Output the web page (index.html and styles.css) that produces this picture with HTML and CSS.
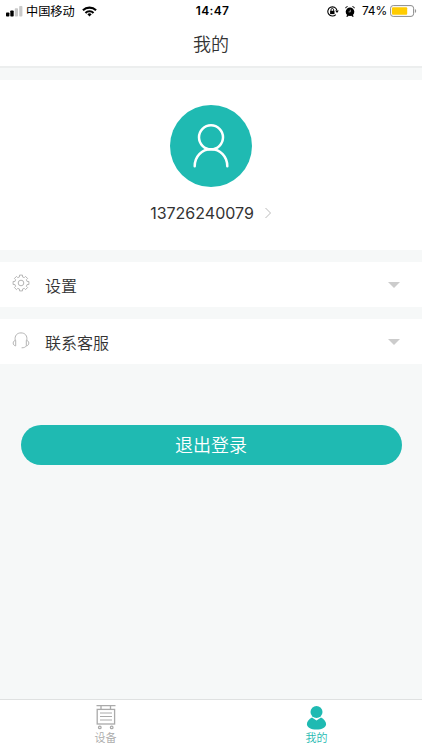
FILE: index.html
```
<!DOCTYPE html>
<html lang="zh-CN">
<head>
<meta charset="utf-8">
<meta name="viewport" content="width=device-width, initial-scale=1">
<title>我的</title>
<link rel="stylesheet" href="styles.css">
</head>
<body>
<div class="app">
  <header class="header">
    <div class="status">
      <div class="status-left">
        <svg class="signal" width="17" height="11" viewBox="0 0 17 11"><rect x="0" y="6.5" width="3.4" height="4" rx=".8"/><rect x="4.3" y="4.5" width="3.4" height="6" rx=".8"/><g fill="#c9c9c9"><rect x="8.8" y="2.3" width="3.2" height="8.2" rx=".8"/><rect x="13.2" y="0" width="3.2" height="10.5" rx=".8"/></g></svg>
        <span class="carrier">中国移动</span>
        <svg class="wifi" width="15" height="11" viewBox="0 0 16 11"><g fill="none" stroke="#000" stroke-width="2.2"><path d="M1 4.2a10 10 0 0 1 14 0"/><path d="M3.7 7a6.1 6.1 0 0 1 8.6 0"/></g><path d="M5.7 8.5a3.3 3.3 0 0 1 4.6 0L8 10.8Z"/></svg>
      </div>
      <time class="clock">14:47</time>
      <div class="status-right">
        <svg class="lock" width="12" height="11" viewBox="0 0 12 11"><path d="M8.8 8.6A4.6 4.6 0 1 1 9.9 4.4" fill="none" stroke="#000" stroke-width="1.1"/><path d="M8.1 4.6h3.7L10 7.1Z"/><rect x="3.1" y="4.8" width="4.4" height="3.3"/><path d="M4 5V3.8a1.3 1.3 0 0 1 2.6 0V5" fill="none" stroke="#000" stroke-width=".9"/></svg>
        <svg class="alarm" width="10" height="11" viewBox="0 0 10 11"><circle cx="5" cy="5.7" r="4.3"/><path d="M.2 2.6A2 2 0 0 1 3.1.5ZM9.8 2.6A2 2 0 0 0 6.9.5ZM1.1 10.5l1.5-2 1.2 1-1.1 1.2ZM8.9 10.5l-1.5-2-1.2 1 1.1 1.2Z"/><path d="M5.3 3.7v2.2H3.6" fill="none" stroke="#fff" stroke-width=".6"/></svg>
        <span class="percent">74%</span>
        <svg class="battery" width="27" height="12" viewBox="0 0 27 12"><rect x=".6" y=".6" width="23" height="10.8" rx="2.6" fill="#fff" stroke="#8b8b8b"/><rect x="2" y="2.2" width="15.2" height="7.6" rx="1" fill="#fc0"/><path d="M24.9 4v4a2.2 2.2 0 0 0 0-4" fill="#999"/></svg>
      </div>
    </div>
    <h1 class="title">我的</h1>
  </header>

  <main class="content">
    <section class="profile">
      <div class="avatar">
        <svg width="38" height="46" viewBox="0 0 38 46" fill="none" stroke="#fff" stroke-width="2.5" stroke-linecap="round"><circle cx="19" cy="14.3" r="12"/><path d="M2.7 43.3c0-10 7-17 16.3-17s16.3 7 16.3 17"/></svg>
      </div>
      <a class="phone"><span>13726240079</span>
        <svg width="8" height="12" viewBox="0 0 8 12" fill="none" stroke="#bbb"><path d="M1.5 1 6.5 6l-5 5"/></svg>
      </a>
    </section>

    <section class="row">
      <svg class="row-icon" width="18" height="18" viewBox="-9 -9 18 18" fill="none" stroke="#b5b5b5" stroke-linejoin="round"><path d="M-1.5-6.1V-7.9H1.5V-6.1L3.3-5.4 4.5-6.6 6.6-4.5 5.4-3.3 6.1-1.5H7.9V1.5H6.1L5.4 3.3 6.6 4.5 4.5 6.6 3.3 5.4 1.5 6.1V7.9H-1.5V6.1L-3.3 5.4-4.5 6.6-6.6 4.5-5.4 3.3-6.1 1.5H-7.9V-1.5H-6.1L-5.4-3.3-6.6-4.5-4.5-6.6-3.3-5.4Z"/><circle r="2.8"/></svg>
      <span class="row-label">设置</span>
      <i class="caret"></i>
    </section>
    <section class="row">
      <svg class="row-icon" width="18" height="18" viewBox="0 0 18 18" fill="none" stroke="#b5b5b5"><path d="M3.2 9.2C2.5 4.6 5 1.9 9 1.9s6.5 2.700 5.8 7.3"/><path d="M3.7 9.3v5.6C2.2 14.8 1.2 13.5 1.2 12.1S2.2 9.4 3.7 9.3ZM14.3 9.3v5.6c1.5-.1 2.5-1.4 2.5-2.8s-1-2.700-2.5-2.8Z"/><path d="M14.4 14.8c-1 1.5-2.5 2-4.8 2"/></svg>
      <span class="row-label">联系客服</span>
      <i class="caret"></i>
    </section>

    <button class="logout">退出登录</button>
  </main>

  <nav class="tabs">
    <a class="tab">
      <svg width="22" height="26" viewBox="0 0 22 26" fill="none" stroke="#aaa" stroke-width="1.3"><path d="M1.5 1.6h19M6 1.6v4M15.500 1.6v4"/><rect x="2.2" y="5.4" width="17.4" height="14.6"/><path d="M5 9h12M5 12.500h12M5 16h12" stroke-width="1"/><circle cx="4.8" cy="23.4" r="1.3"/><circle cx="16.7" cy="23.4" r="1.3"/></svg>
      <span>设备</span>
    </a>
    <a class="tab active">
      <svg width="22" height="26" viewBox="0 0 22 26" fill="#1fbab2"><circle cx="10.5" cy="7.9" r="6"/><path d="M6 13.4 10.5 16.5l4.5-3.1c3 1.5 5.1 4 5.1 6.8 0 3-4 5.300-9.6 5.300S.9 23.200.9 20.200c0-2.800 2.100-5.300 5.100-6.800Z"/></svg>
      <span>我的</span>
    </a>
  </nav>
</div>
</body>
</html>
```
FILE: styles.css
```
* { box-sizing: border-box; }
body {
  margin: 0;
  background: #f6f8f8;
  color: #333;
  font-family: Inter, "Noto Sans CJK SC", sans-serif;
}
svg { display: block; flex: none; }
.app { display: flex; flex-direction: column; height: 750px; }

.header { height: 68px; background: #fff; border-bottom: 2px solid #eceeee; }
.status {
  display: grid;
  grid-template-columns: 1fr auto 1fr;
  align-items: center;
  height: 22px;
  padding: 0 5px 0 6px;
  color: #000;
  font-size: 12px;
  line-height: 22px;
}
.status-left, .status-right { display: flex; align-items: center; }
.status-right { justify-content: flex-end; }
.carrier { margin: 1px 7px 0 3px; font-size: 12.2px; line-height: 21px; }
.clock { padding-left: 2px; font-weight: 600; font-size: 12px; letter-spacing: .3px; }
.lock { margin-right: 6px; }
.alarm { margin-right: 7px; }
.percent { margin-right: 3px; font-size: 12px; letter-spacing: -.2px; }
.title {
  margin: 0;
  padding-top: 1px;
  font-size: 18px;
  font-weight: 350;
  line-height: 43px;
  text-align: center;
}

.content { flex: 1; padding-top: 12px; }
.profile {
  display: flex;
  flex-direction: column;
  align-items: center;
  height: 170px;
  padding-top: 25px;
  background: #fff;
}
.avatar {
  display: flex;
  align-items: center;
  justify-content: center;
  width: 82px;
  height: 82px;
  border-radius: 50%;
  background: #1fbab2;
}
.phone {
  display: flex;
  align-items: center;
  gap: 10px;
  margin-top: 15px;
  font-size: 16px;
  line-height: 22px;
}
.row {
  display: flex;
  align-items: center;
  height: 45px;
  margin-top: 12px;
  padding: 0 22px 0 12px;
  background: #fff;
}
.row-icon { margin: 0 15px 3px 0; }
.row-label { flex: 1; font-size: 16px; font-weight: 350; line-height: 24px; padding-top: 3px; }
.caret {
  border: 6px solid transparent;
  border-top-color: #ccc;
  border-bottom: 0;
}
.logout {
  display: block;
  width: 381px;
  height: 40px;
  margin: 61px auto 0;
  padding: 0 0 2px;
  border: 0;
  border-radius: 20px;
  background: #1fbab2;
  color: #fff;
  font: 350 18px/38px "Noto Sans CJK SC", sans-serif;
}

.tabs { display: flex; height: 51px; border-top: 1px solid #dfe1e1; background: #fff; }
.tab {
  flex: 1;
  display: flex;
  flex-direction: column;
  align-items: center;
  padding-top: 4px;
  color: #aaa;
  font-size: 11px;
  font-weight: 350;
  line-height: 16px;
}
.active { color: #1fbab2; }
```
